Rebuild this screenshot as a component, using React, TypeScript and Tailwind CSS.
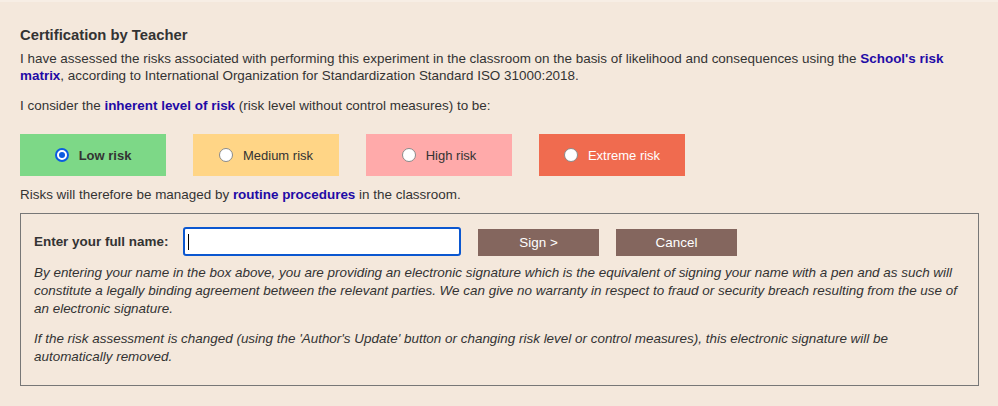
const RISKS = [
  { label: "Low risk", bg: "bg-[#7dd887]", text: "text-[#333] font-bold", checked: true },
  { label: "Medium risk", bg: "bg-[#ffd586]", text: "text-[#333]", checked: false },
  { label: "High risk", bg: "bg-[#ffaaaa]", text: "text-[#333]", checked: false },
  { label: "Extreme risk", bg: "bg-[#f06b4f]", text: "text-white", checked: false },
];

function Radio({ checked }: { checked: boolean }) {
  if (checked) {
    return (
      <span className="flex h-[14px] w-[14px] items-center justify-center rounded-full border-[2px] border-[#0b5ce0] bg-white">
        <span className="h-[6px] w-[6px] rounded-full bg-[#0b5ce0]" />
      </span>
    );
  }
  return <span className="h-[14px] w-[14px] rounded-full border border-[#8a8a8a] bg-white" />;
}

export default function App() {
  return (
    <div
      className="min-h-[406px] w-[998px] border-t-2 border-[#f7eee5] bg-[#f4e8dc] px-[20px] pt-[24px] text-[13.45px] leading-[17px] text-[#333]"
      style={{ fontFamily: "'Liberation Sans', Arial, sans-serif" }}
    >
      <h2 className="text-[14.8px] font-bold leading-[18px] text-[#333]">Certification by Teacher</h2>

      <p className="mt-[6px] pr-[18px]">
        I have assessed the risks associated with performing this experiment in the classroom on the basis of
        likelihood and consequences using the{" "}
        <span className="font-bold text-[#1f0ba6]">School's risk matrix</span>, according to International
        Organization for Standardization Standard ISO 31000:2018.
      </p>

      <p className="mt-[13px]">
        I consider the <span className="font-bold text-[#1f0ba6]">inherent level of risk</span> (risk level without
        control measures) to be:
      </p>

      {/* risk level picker */}
      <div className="mt-[20px] flex gap-[27px] text-[13px]">
        {RISKS.map((r) => (
          <div key={r.label} className={`flex h-[42px] w-[146px] items-center justify-center gap-[10px] ${r.bg}`}>
            <Radio checked={r.checked} />
            <span className={r.text}>{r.label}</span>
          </div>
        ))}
      </div>

      <p className="mt-[10px]">
        Risks will therefore be managed by <span className="font-bold text-[#1f0ba6]">routine procedures</span> in
        the classroom.
      </p>

      {/* signature box */}
      <div className="mt-[10px] mr-[-1px] border border-[#777] px-[13px] pt-[13px] pb-[19px]">
        <div className="flex items-center">
          <span className="w-[149px] font-bold">Enter your full name:</span>
          <div className="flex h-[29px] w-[278px] items-center rounded-[3px] border-2 border-[#0b57d0] bg-white pl-[3px]">
            <span className="h-[16px] w-px bg-black" />
          </div>
          <button className="ml-[17px] mt-[2px] h-[27px] w-[121px] bg-[#84665e] text-white">Sign &gt;</button>
          <button className="ml-[17px] mt-[2px] h-[27px] w-[121px] bg-[#84665e] text-white">Cancel</button>
        </div>

        <p className="mt-[8px] italic leading-[18px]">
          By entering your name in the box above, you are providing an electronic signature which is the equivalent
          of signing your name with a pen and as such will constitute a legally binding agreement between the
          relevant parties. We can give no warranty in respect to fraud or security breach resulting from the use of
          an electronic signature.
        </p>
        <p className="mt-[12px] italic leading-[18px]">
          If the risk assessment is changed (using the 'Author's Update' button or changing risk level or control
          measures), this electronic signature will be automatically removed.
        </p>
      </div>
    </div>
  );
}
